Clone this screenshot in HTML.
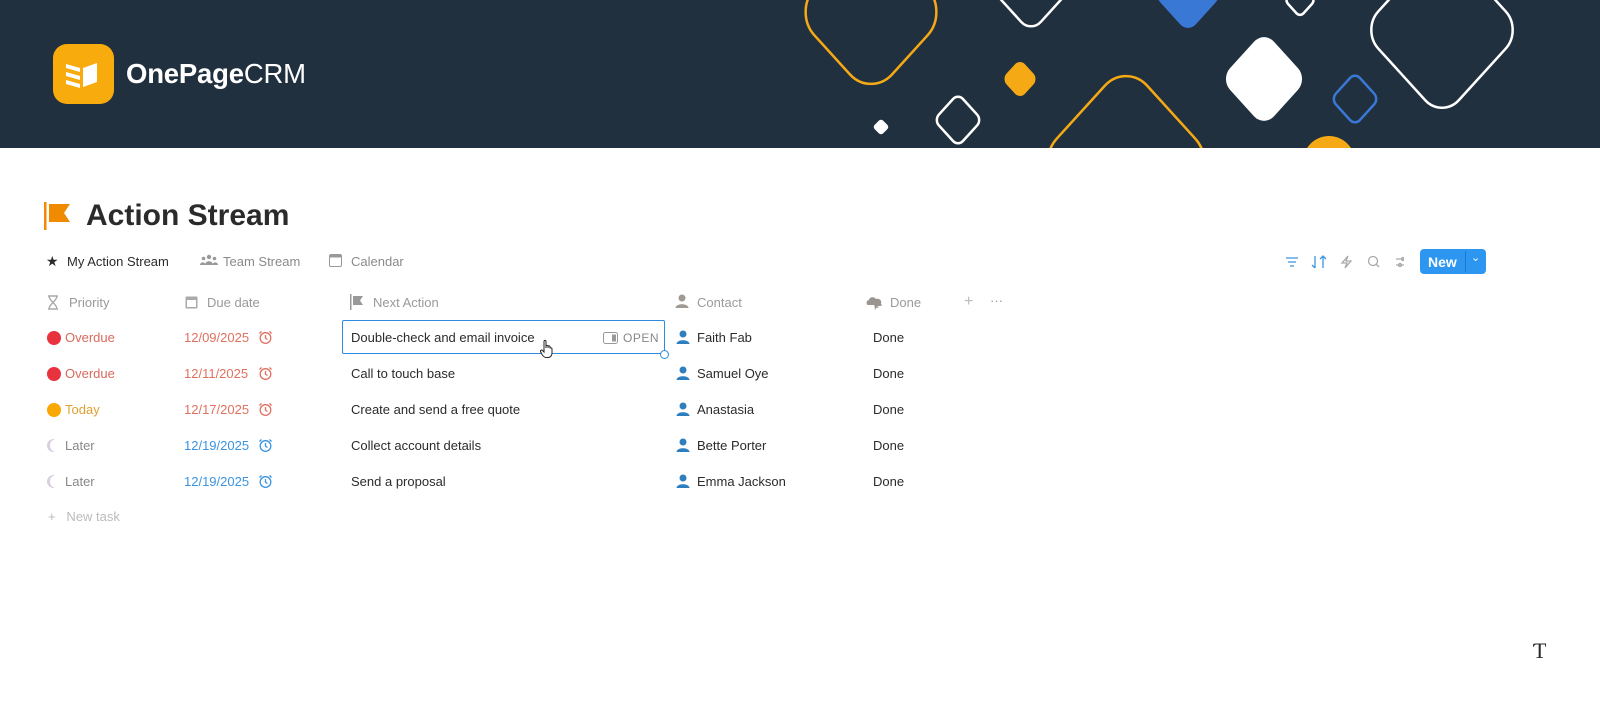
<!DOCTYPE html>
<html><head><meta charset="utf-8"><style>
*{margin:0;padding:0;box-sizing:border-box}
body{width:1600px;height:716px;background:#fff;font-family:"Liberation Sans",sans-serif;position:relative;overflow:hidden;color:#2b2b2b}
.hdr{position:absolute;left:0;top:0;width:1600px;height:148px;background:#21303f;overflow:hidden}
.abs{position:absolute;white-space:nowrap}
.t13{font-size:13px}
.gray{color:#9a9a9a}
rect.s{vector-effect:non-scaling-stroke}
</style></head><body>
<div class="hdr">
<svg width="1600" height="148" style="position:absolute;left:0;top:0">
 <g fill="none" stroke-width="2.5">
  <g transform="translate(871,12) scale(1,1.1) rotate(45)"><rect class="s" x="-55" y="-55" width="110" height="110" rx="30" stroke="#f5a915"/></g>
  <g transform="translate(1031,-14) scale(1,1.1) rotate(45)"><rect class="s" x="-30" y="-30" width="60" height="60" rx="14" stroke="#fff"/></g>
  <g transform="translate(1300,0) scale(1,1.1) rotate(45)"><rect class="s" x="-11" y="-11" width="22" height="22" rx="5" stroke="#fff"/></g>
  <g transform="translate(1442,30) scale(1,1.1) rotate(45)"><rect class="s" x="-57" y="-57" width="114" height="114" rx="24" stroke="#fff"/></g>
  <g transform="translate(958,120) scale(1,1.1) rotate(45)"><rect class="s" x="-17" y="-17" width="34" height="34" rx="7" stroke="#fff"/></g>
  <g transform="translate(1126,162) scale(1,1.1) rotate(45)"><rect class="s" x="-64" y="-64" width="128" height="128" rx="30" stroke="#f5a915"/></g>
  <g transform="translate(1355,99) scale(1,1.1) rotate(45)"><rect class="s" x="-17" y="-17" width="34" height="34" rx="7" stroke="#3a78d6"/></g>
 </g>
 <g transform="translate(1188,-6) scale(1,1.1) rotate(45)"><rect x="-25" y="-25" width="50" height="50" rx="11" fill="#3a78d6"/></g>
 <g transform="translate(1020,79) scale(1,1.1) rotate(45)"><rect x="-13" y="-13" width="26" height="26" rx="7" fill="#f5a915"/></g>
 <g transform="translate(881,127) rotate(45)"><rect x="-6" y="-6" width="12" height="12" rx="3" fill="#fff"/></g>
 <g transform="translate(1264,79) scale(1,1.1) rotate(45)"><rect x="-31" y="-31" width="62" height="62" rx="14" fill="#fff"/></g>
 <circle cx="1329" cy="162" r="26" fill="#f5a915"/>
</svg>
<div class="abs" style="left:53px;top:44px;width:61px;height:60px;background:#f8ab0c;border-radius:14px"></div>
<svg class="abs" style="left:53px;top:44px" width="61" height="60">
 <g fill="#fff"><path d="M13 20 L27 24 L27 28 L13 24Z"/><path d="M13 28 L27 32 L27 36 L13 32Z"/><path d="M13 36 L27 40 L27 44 L13 40Z"/><path d="M30 24 L44 19 L44 38 L30 43Z"/></g>
</svg>
<div class="abs" style="left:126px;top:58px;font-size:27.5px;color:#fff;letter-spacing:-0.2px"><b>OnePage</b>CRM</div>
</div>

<svg class="abs" style="left:44px;top:202px" width="28" height="30"><rect x="0" y="0" width="2.5" height="28" fill="#f08a00"/><path d="M5 2 H26 L20 11 L26 20 H5Z" fill="#f08a00"/></svg>
<div class="abs" style="left:86px;top:199px;font-size:30px;font-weight:bold;color:#2b2b2b">Action Stream</div>

<div class="abs t13" style="left:46px;top:253px;font-size:14px">★</div>
<div class="abs t13" style="left:67px;top:254px;color:#2b2b2b">My Action Stream</div>
<svg class="abs" style="left:200px;top:254px" width="18" height="12" fill="#999"><circle cx="9" cy="3" r="2.2"/><circle cx="3.5" cy="4.5" r="1.8"/><circle cx="14.5" cy="4.5" r="1.8"/><path d="M5 11C5 6 13 6 13 11Z"/><path d="M0 11C0 7.5 6 7.5 5 11Z"/><path d="M18 11C18 7.5 12 7.5 13 11Z"/></svg>
<div class="abs t13" style="left:223px;top:254px;color:#8a8a8a">Team Stream</div>
<svg class="abs" style="left:329px;top:253px" width="13" height="14"><rect x="0.5" y="1.5" width="12" height="12" rx="1.5" fill="none" stroke="#999"/><rect x="0.5" y="1.5" width="12" height="3" fill="#999"/></svg>
<div class="abs t13" style="left:351px;top:254px;color:#8a8a8a">Calendar</div>

<svg class="abs" style="left:1284px;top:254px" width="120" height="16" fill="none" stroke-width="1.3">
 <g stroke="#3a94e0"><path d="M2 4H14M4 8H12M6 12H10"/><path d="M31 2V14M28 11L31 14M39 14V2M36 5L39 2L42 5"/></g>
 <g stroke="#aaa"><path d="M64 2L58 9H63L61 14L67 7H62Z"/><circle cx="89" cy="7" r="4.5"/><path d="M92 10L95 13"/><path d="M112 5H124M112 11H124"/><circle cx="119" cy="5" r="1.5"/><circle cx="116" cy="11" r="1.5"/></g>
</svg>
<div class="abs" style="left:1420px;top:249px;width:66px;height:25px;background:#2d96f0;border-radius:4px;color:#fff;font-size:14px;font-weight:bold;padding:5px 0 0 0"><span style="margin-left:8px">New</span><span style="position:absolute;left:45px;top:2px;height:21px;border-left:1px solid #1e78c8"></span><span style="position:absolute;left:51px;top:2px;font-size:11px;font-weight:normal">⌄</span></div>

<!-- column headers -->
<svg class="abs" style="left:47px;top:295px" width="12" height="15" fill="none" stroke="#aaa" stroke-width="1.4"><path d="M1 1H11M1 14H11M2 1C2 6 10 9 10 14M10 1C10 6 2 9 2 14"/></svg>
<div class="abs t13 gray" style="left:69px;top:295px">Priority</div>
<svg class="abs" style="left:185px;top:295px" width="13" height="14"><rect x="0.5" y="1.5" width="12" height="12" rx="1" fill="#aaa"/><rect x="2" y="5" width="9" height="7" fill="#fff"/></svg>
<div class="abs t13 gray" style="left:207px;top:295px">Due date</div>
<svg class="abs" style="left:350px;top:294px" width="16" height="16"><rect x="0" y="0" width="1.5" height="16" fill="#999"/><path d="M3 2H13L10 6.5L13 11H3Z" fill="#999"/></svg>
<div class="abs t13 gray" style="left:373px;top:295px">Next Action</div>
<svg class="abs" style="left:675px;top:294px" width="14" height="15" fill="#a09a92"><circle cx="7" cy="4" r="3.5"/><path d="M0.5 14C0.5 9 13.5 9 13.5 14Z"/></svg>
<div class="abs t13 gray" style="left:697px;top:295px">Contact</div>
<svg class="abs" style="left:866px;top:296px" width="18" height="14" fill="#9a9590"><path d="M2 9C0 9 0 4 3 4C3 1 8 0 10 3C14 2 16 5 15 8C17 9 15 10 14 10H9L8 9Z"/><path d="M8 6L13 12L10.5 11.5L9 14Z"/></svg>
<div class="abs t13 gray" style="left:890px;top:295px">Done</div>
<div class="abs t13" style="left:964px;top:293px;color:#bbb;font-size:16px">+</div>
<div class="abs t13" style="left:990px;top:293px;color:#999">···</div>

<!-- rows -->
<div class="abs" style="left:342px;top:320px;width:323px;height:34px;border:1.5px solid #2d8ae0;border-radius:2px"></div>
<div class="abs" style="left:660px;top:350px;width:9px;height:9px;border:1.5px solid #2d8ae0;border-radius:50%;background:#fff"></div>
<svg class="abs" style="left:603px;top:332px" width="16" height="12"><rect x="0.5" y="0.5" width="14" height="11" rx="2" fill="none" stroke="#999"/><rect x="9" y="2.5" width="4" height="7" fill="#999"/></svg>
<div class="abs" style="left:623px;top:331px;font-size:12px;color:#888;letter-spacing:0.5px">OPEN</div>
<svg class="abs" style="left:539px;top:339px" width="16" height="20" fill="#fff" stroke="#222" stroke-width="1"><path d="M5 10V2.5C5 1 7 1 7 2.5V9V7.5C7 6 9 6 9 7.5V9V8C9 6.5 11 6.5 11 8V9.5C11 8.5 13 8.5 13 10V14C13 17 11 18.5 9 18.5H7C5 18.5 4 17 3 15.5L1.5 12.5C1 11.5 2.5 10.5 3.5 11.5L5 13Z"/></svg>

<div id="rows"></div>
<div class="abs t13" style="left:48px;top:509px;color:#bbb">+&nbsp;&nbsp; New task</div>
<div class="abs" style="left:1533px;top:638px;font-size:22px;font-family:'Liberation Serif',serif">Ƭ</div>
<script>
var R=[["#e8323e","Overdue","#d96a5c","12/09/2025","#e07060","Double-check and email invoice","Faith Fab"],
["#e8323e","Overdue","#d96a5c","12/11/2025","#e07060","Call to touch base","Samuel Oye"],
["#f8a800","Today","#e0a030","12/17/2025","#e07060","Create and send a free quote","Anastasia"],
["moon","Later","#888","12/19/2025","#3a94e0","Collect account details","Bette Porter"],
["moon","Later","#888","12/19/2025","#3a94e0","Send a proposal","Emma Jackson"]];
var h="";R.forEach(function(r,i){var y=330+i*36;
h+=r[0]=="moon"?'<div class="abs" style="left:50px;top:'+(y+1)+'px;width:13px;height:13px;border-radius:50%;box-shadow:-3px 0 0 0 #d8d0e0"></div>':'<div class="abs" style="left:47px;top:'+(y+1)+'px;width:14px;height:14px;border-radius:50%;background:'+r[0]+'"></div>';
h+='<div class="abs t13" style="left:65px;top:'+y+'px;color:'+r[2]+'">'+r[1]+'</div>';
h+='<div class="abs t13" style="left:184px;top:'+y+'px;color:'+r[4]+'">'+r[3]+'</div>';
h+='<svg class="abs" style="left:258px;top:'+(y)+'px" width="15" height="15" fill="none" stroke="'+r[4]+'" stroke-width="1.3"><circle cx="7.5" cy="8" r="5.3"/><path d="M7.5 5V8.3L9.5 9.5M1.5 3.5L3.5 1.5M13.5 3.5L11.5 1.5"/></svg>';
h+='<div class="abs t13" style="left:351px;top:'+y+'px">'+r[5]+'</div>';
h+='<svg class="abs" style="left:676px;top:'+(y)+'px" width="14" height="15" fill="#2d7fc0"><circle cx="7" cy="4" r="3.5"/><path d="M0.5 14C0.5 9 13.5 9 13.5 14Z"/></svg>';
h+='<div class="abs t13" style="left:697px;top:'+y+'px">'+r[6]+'</div>';
h+='<div class="abs t13" style="left:873px;top:'+y+'px">Done</div>';});
document.getElementById("rows").innerHTML=h;
</script>
</body></html>
